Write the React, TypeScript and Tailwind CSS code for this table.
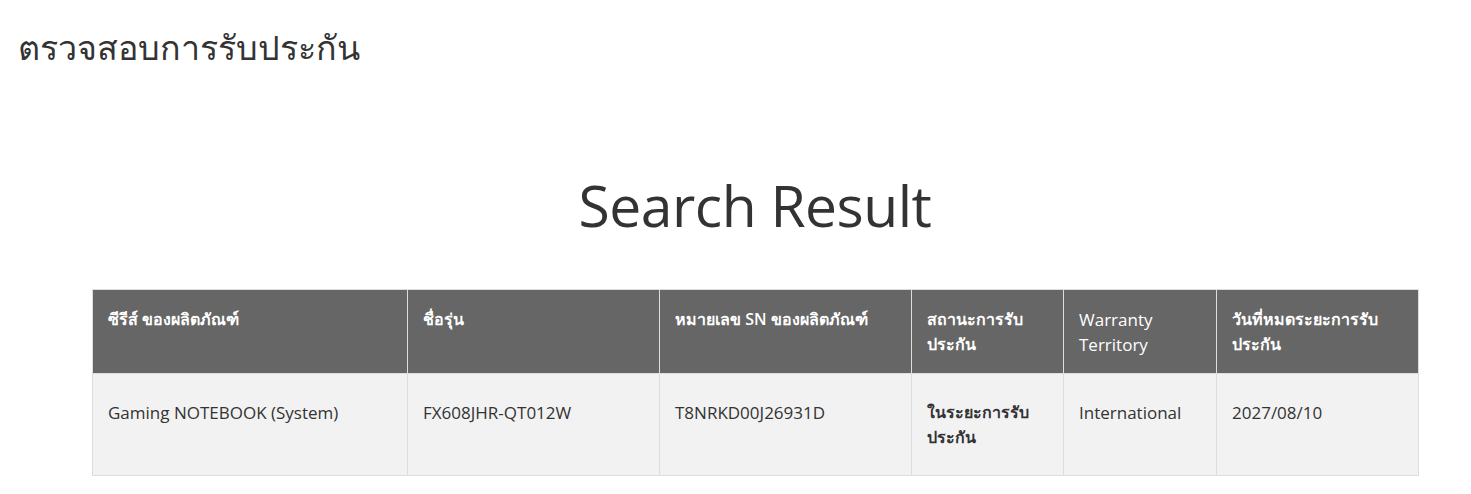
import React from 'react'

const headers = [
	{ label: 'ซีรีส์ ของผลิตภัณฑ์', w: 'w-[315px]', bold: true },
	{ label: 'ชื่อรุ่น', w: 'w-[252px]', bold: true },
	{ label: 'หมายเลข SN ของผลิตภัณฑ์', w: 'w-[252px]', bold: true },
	{ label: 'สถานะการรับประกัน', w: 'w-[152px]', bold: true },
	{ label: 'Warranty Territory', w: 'w-[153px]', bold: false },
	{ label: 'วันที่หมดระยะการรับประกัน', w: 'w-[202px]', bold: true },
]

const row = [
	{ value: 'Gaming NOTEBOOK (System)', bold: false },
	{ value: 'FX608JHR-QT012W', bold: false },
	{ value: 'T8NRKD00J26931D', bold: false },
	{ value: 'ในระยะการรับประกัน', bold: true },
	{ value: 'International', bold: false },
	{ value: '2027/08/10', bold: false },
]

export default function App() {
	return (
		<div className="min-h-[494px] bg-white text-[#333] font-['Open_Sans','Noto_Sans','Noto_Sans_CJK_SC',sans-serif]">
			<h1 className="pl-[18px] pt-[24px] text-[34px] leading-[46px] font-medium">ตรวจสอบการรับประกัน</h1>

			<div className="px-[92px]">
				<h2 className="w-[1326px] mt-[97px] text-center text-[57px] leading-[76px] font-normal tracking-[-0.5px]">Search Result</h2>

				<table className="mt-[46px] w-[1326px] border-collapse table-fixed">
					<thead>
						<tr className="bg-[#666] text-white">
							{headers.map((h) => (
								<th
									key={h.label}
									className={`${h.w} border border-[#ddd] px-[15px] pt-[17px] pb-[16px] text-left align-top leading-[25px] ${h.bold ? 'text-[16px] font-semibold' : 'text-[17px] font-normal'}`}
								>
									{h.label}
								</th>
							))}
						</tr>
					</thead>
					<tbody>
						<tr className="bg-[#f2f2f2]">
							{row.map((c) => (
								<td
									key={c.value}
									className={`border border-[#ddd] px-[15px] pt-[26px] pb-[25px] align-top leading-[25px] ${c.bold ? 'text-[16px] font-semibold' : 'text-[17px]'}`}
								>
									{c.value}
								</td>
							))}
						</tr>
					</tbody>
				</table>
			</div>
		</div>
	)
}
